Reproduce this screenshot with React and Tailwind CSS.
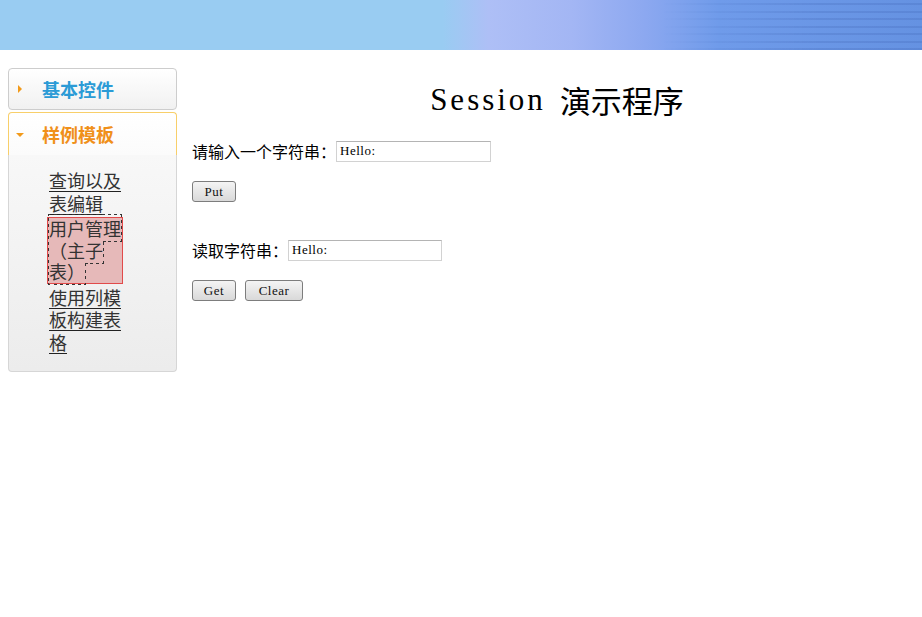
import React from "react";

const cjk = "font-['Noto_Sans_CJK_SC','Noto_Sans',sans-serif]";
const serif = "font-['Liberation_Serif','Noto_Sans_CJK_SC',serif]";

function Header() {
  return (
    <div className="flex h-[50px] w-full bg-[linear-gradient(to_right,#99ccf2_0%,#99ccf2_48%,#aebff6_53%,#a3b6f4_62%,#8ca8f0_70%,#6f9bea_78%,#6592e2_100%)]">
      <div className="flex-1" />
      <div className="h-full w-[260px] bg-[repeating-linear-gradient(to_bottom,transparent_0px,transparent_3px,rgba(60,95,175,0.22)_3px,rgba(60,95,175,0.22)_5px,transparent_5px,transparent_7.5px)] [mask-image:linear-gradient(to_right,transparent,black_60%)]" />
    </div>
  );
}

function Sidebar() {
  const links = ["查询以及表编辑", "用户管理（主子表）", "使用列模板构建表格"];
  return (
    <div className="ml-[8px] mt-[18px] flex w-[169px] flex-col gap-[2px]">
      <div className="flex h-[42px] items-center rounded-[4px] border border-[#cdcdcd] bg-gradient-to-b from-white to-[#f1f1f1]">
        <span className="ml-[9px] h-0 w-0 border-y-[4px] border-l-[4px] border-y-transparent border-l-[#f29a1a]" />
        <span className={`${cjk} ml-[20px] text-[18px] font-bold text-[#2b9bd6]`}>基本控件</span>
      </div>

      <div className="flex flex-col">
        <div className="flex h-[43px] items-center rounded-t-[4px] border border-b-0 border-[#f8cf6a] bg-gradient-to-b from-white to-[#fbfbfb]">
          <span className="ml-[7px] mt-[1px] h-0 w-0 border-x-[4px] border-t-[4px] border-x-transparent border-t-[#f29a1a]" />
          <span className={`${cjk} ml-[18px] text-[18px] font-bold text-[#f0901a]`}>样例模板</span>
        </div>
        <div className="h-[217px] rounded-b-[4px] border border-t-0 border-[#d6d6d6] bg-gradient-to-b from-[#f8f8f8] to-[#ececec] pl-[38px] pt-[14px]">
          <div className={`${cjk} flex w-[76px] flex-col text-[18px] leading-[22.5px] text-[#333]`}>
            <a className="px-[2px] underline decoration-[#222] underline-offset-[3px]">{links[0]}</a>
            <div className="mb-[2px] mt-[3px] border border-[#e14a4a] bg-[#e6b9b9] px-[1px] leading-[21.5px]">
              <a className="outline-1 outline-dotted outline-[#333]">{links[1]}</a>
            </div>
            <a className="px-[2px] underline decoration-[#222] underline-offset-[3px]">{links[2]}</a>
          </div>
        </div>
      </div>
    </div>
  );
}

function Button({ children, width }) {
  return (
    <button
      className={`${serif} h-[21px] ${width} rounded-[3px] border border-[#7d7d7d] bg-gradient-to-b from-[#f4f4f4] to-[#d9d9d9] text-[13px] font-normal leading-none tracking-[0.5px] text-[#111]`}
    >
      {children}
    </button>
  );
}

function Field({ label, width }) {
  return (
    <div className="flex h-[20px] items-center">
      <span className={`${cjk} text-[16px] text-black`}>{label}</span>
      <div
        className={`${serif} flex h-[21px] ${width} items-center border border-[#d2d2d2] border-t-[#b4b4b4] px-[3px] text-[13px] tracking-[0.5px] text-black`}
      >
        Hello:
      </div>
    </div>
  );
}

export default function App() {
  return (
    <div className="min-h-[617px] w-full bg-white">
      <Header />
      <div className="flex">
        <Sidebar />
        <div className="ml-[7px] flex flex-1 flex-col pl-[8px] pt-[30px]">
          <h1 className="flex h-[40px] items-center justify-center text-black">
            <span className={`${serif} text-[31px] tracking-[3px]`}>Session</span>
            <span className={`${cjk} ml-[14px] text-[31px] font-normal`}>演示程序</span>
          </h1>
          <div className="mt-[21px]">
            <Field label="请输入一个字符串：" width="w-[155px]" />
          </div>
          <div className="mt-[20px] flex">
            <Button width="w-[44px]">Put</Button>
          </div>
          <div className="mt-[38px]">
            <Field label="读取字符串：" width="w-[154px]" />
          </div>
          <div className="mt-[20px] flex gap-[9px]">
            <Button width="w-[44px]">Get</Button>
            <Button width="w-[58px]">Clear</Button>
          </div>
        </div>
      </div>
    </div>
  );
}
